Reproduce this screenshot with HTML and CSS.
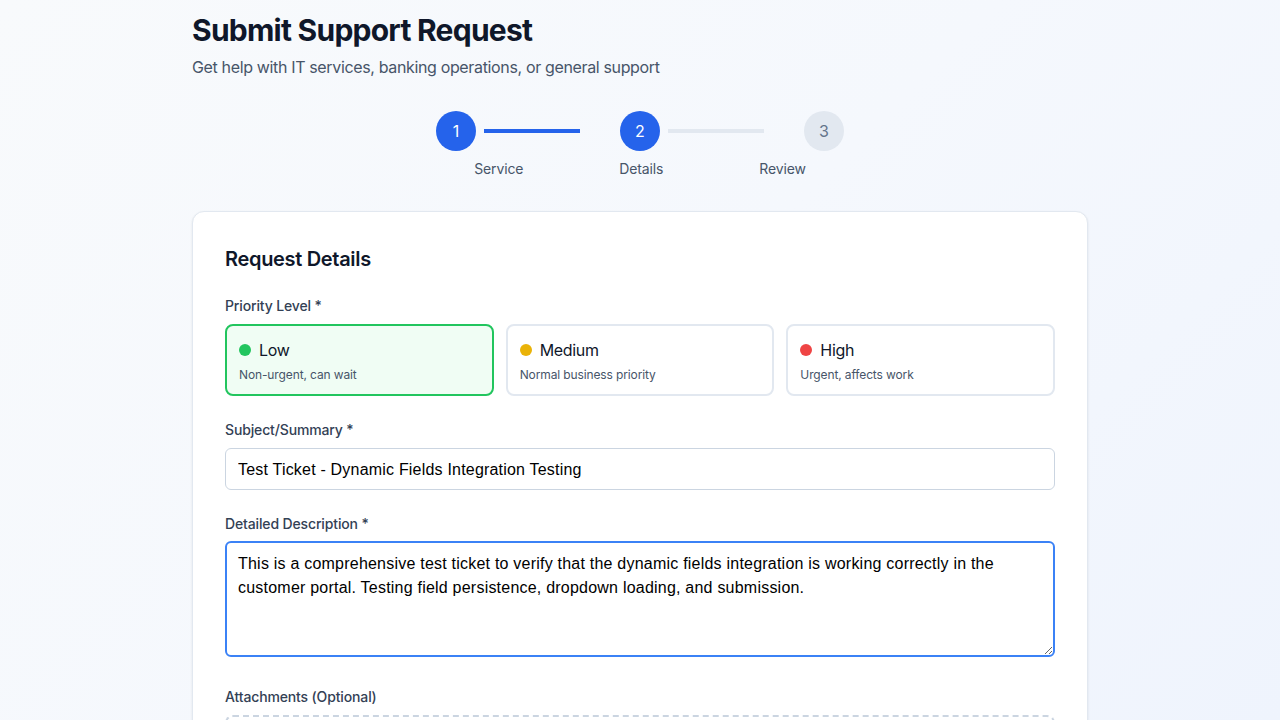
FILE: index.html
```html
<!DOCTYPE html>
<html lang="en">
<head>
<meta charset="utf-8">
<title>Submit Support Request</title>
<link rel="stylesheet" href="styles.css">
</head>
<body>
<main class="page">
  <div class="container">
    <header class="header">
      <h1 class="title">Submit Support Request</h1>
      <p class="subtitle">Get help with IT services, banking operations, or general support</p>
    </header>

    <div class="stepper">
      <div class="steps">
        <div class="step-circle active">1</div>
        <div class="step-line active"></div>
        <div class="step-circle active">2</div>
        <div class="step-line"></div>
        <div class="step-circle">3</div>
      </div>
      <div class="step-labels">
        <span>Service</span>
        <span>Details</span>
        <span>Review</span>
      </div>
    </div>

    <section class="card">
      <h2 class="card-title">Request Details</h2>

      <div class="field">
        <label class="label">Priority Level *</label>
        <div class="priority-grid">
          <div class="priority selected">
            <div class="priority-head"><span class="dot dot-green"></span><span class="priority-name">Low</span></div>
            <div class="priority-desc">Non-urgent, can wait</div>
          </div>
          <div class="priority">
            <div class="priority-head"><span class="dot dot-yellow"></span><span class="priority-name">Medium</span></div>
            <div class="priority-desc">Normal business priority</div>
          </div>
          <div class="priority">
            <div class="priority-head"><span class="dot dot-red"></span><span class="priority-name">High</span></div>
            <div class="priority-desc">Urgent, affects work</div>
          </div>
        </div>
      </div>

      <div class="field">
        <label class="label" for="subject">Subject/Summary *</label>
        <input id="subject" class="input" type="text" value="Test Ticket - Dynamic Fields Integration Testing">
      </div>

      <div class="field field-desc">
        <label class="label label-desc" for="desc">Detailed Description *</label>
        <textarea id="desc" class="textarea" rows="4">This is a comprehensive test ticket to verify that the dynamic fields integration is working correctly in the customer portal. Testing field persistence, dropdown loading, and submission.</textarea>
      </div>

      <div class="field">
        <label class="label">Attachments (Optional)</label>
        <div class="dropzone"></div>
      </div>
    </section>
  </div>
</main>
</body>
</html>
```

FILE: styles.css
```css
* { box-sizing: border-box; }

html, body {
  margin: 0;
  padding: 0;
  height: 100%;
}

body {
  font-family: Inter, "Noto Sans", sans-serif;
  letter-spacing: -0.02em;
  background: linear-gradient(135deg, #f8fafc 0%, #f5f8fd 50%, #eff4fd 100%);
  color: #0f172a;
  overflow: hidden;
}

.page {
  min-height: 100vh;
  padding-top: 12px;
}

.container {
  width: 896px;
  margin: 0 auto;
}

.title {
  margin: 0;
  font-size: 30px;
  line-height: 36px;
  font-weight: 700;
  color: #0f172a;
  letter-spacing: -0.025em;
}

.subtitle {
  margin: 7px 0 0;
  font-size: 16px;
  line-height: 24px;
  color: #475569;
  letter-spacing: -0.022em;
}

.stepper {
  margin-top: 32px;
  display: flex;
  flex-direction: column;
  align-items: center;
}

.steps {
  display: flex;
  align-items: center;
}

.step-circle {
  width: 40px;
  height: 40px;
  border-radius: 50%;
  background: #e2e8f0;
  color: #64748b;
  display: flex;
  align-items: center;
  justify-content: center;
  font-size: 16px;
  font-weight: 400;
  letter-spacing: 0;
}

.step-circle.active {
  background: #2563eb;
  color: #ffffff;
}

.step-line {
  width: 96px;
  height: 4px;
  margin: 0 40px 0 8px;
  background: #e2e8f0;
}

.step-line.active {
  background: #2563eb;
}

.step-labels {
  margin-top: 8px;
  display: flex;
  gap: 96px;
  font-size: 14px;
  line-height: 20px;
  color: #475569;
  letter-spacing: -0.01em;
}

.card {
  margin-top: 32px;
  background: #ffffff;
  border: 1px solid #e2e8f0;
  border-radius: 12px;
  box-shadow: 0 1px 3px rgba(15, 23, 42, 0.06), 0 1px 2px rgba(15, 23, 42, 0.04);
  padding: 33px 32px 32px;
  min-height: 600px;
}

.card-title {
  margin: 0 0 23px;
  font-size: 20px;
  line-height: 28px;
  font-weight: 600;
  color: #0f172a;
}

.field {
  margin-bottom: 24px;
}

.field-desc {
  margin-bottom: 30px;
}

.label {
  display: block;
  margin-bottom: 8px;
  font-size: 14px;
  line-height: 20px;
  font-weight: 500;
  color: #334155;
  letter-spacing: -0.01em;
}

.label-desc {
  margin-top: 1px;
  margin-bottom: 7px;
}

.priority-grid {
  display: grid;
  grid-template-columns: repeat(3, 1fr);
  gap: 12px;
}

.priority {
  border: 2px solid #e2e8f0;
  border-radius: 8px;
  padding: 12px 12px 11px;
  background: #ffffff;
}

.priority.selected {
  border-color: #22c55e;
  background: #f0fdf4;
}

.priority-head {
  display: flex;
  align-items: center;
  gap: 8px;
  height: 24px;
}

.dot {
  width: 12px;
  height: 12px;
  border-radius: 50%;
  flex: none;
}

.dot-green { background: #22c55e; }
.dot-yellow { background: #eab308; }
.dot-red { background: #ef4444; }

.priority-name {
  font-size: 16px;
  line-height: 24px;
  font-weight: 400;
  color: #0f172a;
}

.priority-desc {
  margin-top: 5px;
  font-size: 12px;
  line-height: 16px;
  color: #475569;
  letter-spacing: -0.01em;
}

.input {
  display: block;
  width: 100%;
  height: 42px;
  padding: 9px 12px 7px;
  border: 1px solid #cbd5e1;
  border-radius: 6px;
  background: #ffffff;
  font-family: "Liberation Sans", Arial, sans-serif;
  font-size: 16px;
  letter-spacing: 0.2px;
  color: #000000;
  outline: none;
}

.textarea {
  display: block;
  width: 100%;
  height: 116px;
  padding: 9px 11px;
  border: 2px solid #3b82f6;
  border-radius: 6px;
  background: #ffffff;
  font-family: "Liberation Sans", Arial, sans-serif;
  font-size: 16px;
  line-height: 24px;
  letter-spacing: 0.22px;
  color: #000000;
  outline: none;
  resize: vertical;
}

.dropzone {
  height: 120px;
  border: 2px dashed #cbd5e1;
  border-radius: 8px;
}
```
